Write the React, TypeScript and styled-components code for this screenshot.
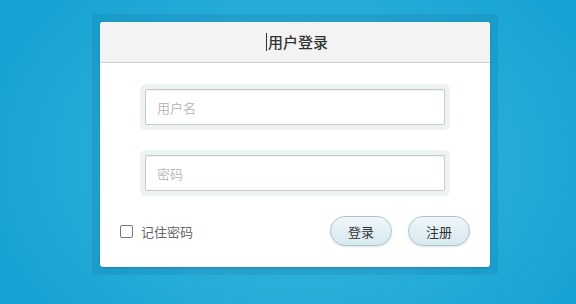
import React from "react";
import styled, { createGlobalStyle } from "styled-components";

const Global = createGlobalStyle`
  html, body { margin: 0; padding: 0; }
  body {
    width: 576px;
    height: 304px;
    overflow: hidden;
    font-family: "Noto Sans CJK SC", "Noto Sans", sans-serif;
  }
`;

const Page = styled.div`
  width: 576px;
  height: 304px;
  box-sizing: border-box;
  padding: 14px 0 0 92px;
  display: flex;
  justify-content: flex-start;
  align-items: flex-start;
  background: radial-gradient(ellipse 320px 240px at 300px 160px, #3db6dd 0%, #2aaed9 50%, #17a3d3 100%);
`;

const Frame = styled.div`
  padding: 8px;
  border-radius: 4px;
  background: rgba(0, 60, 100, 0.1);
`;

const Card = styled.div`
  width: 390px;
  height: 245px;
  background: #fff;
  border-radius: 3px;
  overflow: hidden;
  box-shadow: 0 1px 2px rgba(0, 0, 0, 0.15);
  display: flex;
  flex-direction: column;
`;

const Header = styled.div`
  height: 40px;
  background: #f3f3f3;
  border-bottom: 1px solid #cfcfcf;
  display: flex;
  align-items: center;
  justify-content: center;
  padding-left: 4px;
`;

const Title = styled.h1`
  margin: 0;
  font-size: 15px;
  font-weight: 500;
  color: #333;
  line-height: 18px;
  border-left: 1.5px solid #333;
  padding-left: 1px;
`;

const Body = styled.div`
  display: flex;
  flex-direction: column;
  align-items: center;
  padding-top: 21px;
  gap: 20px;
`;

const Halo = styled.div`
  padding: 5px;
  border-radius: 6px;
  background: #edf2f5;
`;

const Input = styled.input`
  display: block;
  width: 300px;
  height: 36px;
  box-sizing: border-box;
  border: 1px solid #c9c9c9;
  border-radius: 2px;
  padding: 0 11px;
  font-family: "Noto Sans CJK SC", "Noto Sans", sans-serif;
  font-size: 13px;
  color: #333;
  outline: none;
  box-shadow: inset 0 1px 1px rgba(0, 0, 0, 0.06);
  &::placeholder { color: #bcbcbc; }
`;

const Footer = styled.div`
  align-self: stretch;
  display: flex;
  align-items: center;
  justify-content: space-between;
  padding: 0 20px 0 20px;
`;

const Remember = styled.label`
  display: flex;
  align-items: center;
  gap: 8px;
  font-size: 13px;
  color: #666;
`;

const Box = styled.span`
  width: 13px;
  height: 13px;
  box-sizing: border-box;
  border: 1px solid #777;
  border-radius: 2px;
  background: #fff;
`;

const Buttons = styled.div`
  display: flex;
  gap: 16px;
`;

const Button = styled.button`
  width: 62px;
  height: 30px;
  border-radius: 15px;
  border: 1px solid #a9c6d0;
  background: linear-gradient(#f0f7fa, #d6e8ef);
  box-shadow: 0 1px 2px rgba(0, 0, 0, 0.12);
  font-family: "Noto Sans CJK SC", "Noto Sans", sans-serif;
  font-size: 13px;
  color: #333;
  padding: 0;
  cursor: pointer;
`;

export default function App() {
  return (
    <>
      <Global />
      <Page>
        <Frame>
          <Card>
            <Header>
              <Title>用户登录</Title>
            </Header>
            <Body>
              <Halo>
                <Input placeholder="用户名" />
              </Halo>
              <Halo>
                <Input type="password" placeholder="密码" />
              </Halo>
              <Footer>
                <Remember>
                  <Box />
                  记住密码
                </Remember>
                <Buttons>
                  <Button>登录</Button>
                  <Button>注册</Button>
                </Buttons>
              </Footer>
            </Body>
          </Card>
        </Frame>
      </Page>
    </>
  );
}
